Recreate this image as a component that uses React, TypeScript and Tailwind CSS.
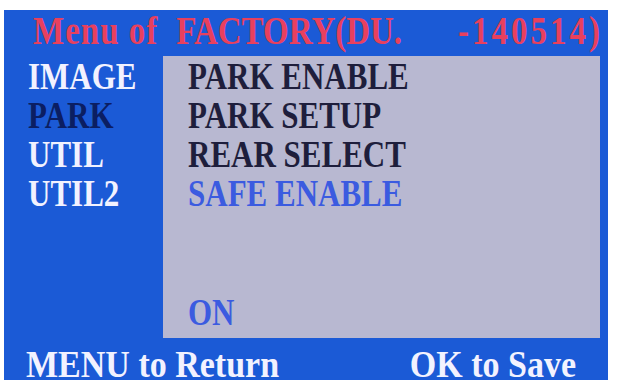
import React from "react";

const leftItems = [
  { label: "IMAGE", active: false },
  { label: "PARK", active: true },
  { label: "UTIL", active: false },
  { label: "UTIL2", active: false },
];

const rightItems = [
  { label: "PARK ENABLE", selected: false },
  { label: "PARK SETUP", selected: false },
  { label: "REAR SELECT", selected: false },
  { label: "SAFE ENABLE", selected: true },
];

const osdFont = { fontFamily: '"Liberation Serif", "Times New Roman", serif' };

const App: React.FC = () => {
  return (
    <div className="w-[617px] h-[385px] bg-white overflow-hidden" style={osdFont}>
      <div className="ml-[4px] mt-[10px] w-[604px] h-[370px] bg-[#1b5ad6] flex flex-col font-bold">
        {/* title */}
        <div className="h-[46px] flex items-center pl-[29px] pr-[5px] text-[#e8405e] text-[33px] leading-[46px]">
          <span className="inline-block scale-y-[1.2] -translate-y-[2px] tracking-[1px]">Menu of</span>
          <span className="inline-block scale-y-[1.2] -translate-y-[2px] ml-[18px]">FACTORY(DU.</span>
          <span className="inline-block scale-y-[1.2] -translate-y-[2px] ml-auto tracking-[3px]">-140514)</span>
        </div>

        {/* body */}
        <div className="flex h-[282px]">
          <div className="w-[159px] pl-[24px] pt-[1px] text-[31px] leading-[39px]">
            {leftItems.map((item) => (
              <div key={item.label} className="h-[39px]">
                <span
                  className={`inline-block scale-y-[1.22] ${
                    item.active ? "text-[#0b1e62]" : "text-[#f2f2ff]"
                  }`}
                >
                  {item.label}
                </span>
              </div>
            ))}
          </div>
          <div className="w-[437px] bg-[#b8b8d1] pl-[25px] pt-[1px] text-[31px] leading-[39px]">
            {rightItems.map((item) => (
              <div key={item.label} className="h-[39px]">
                <span
                  className={`inline-block scale-y-[1.22] ${
                    item.selected ? "text-[#3b5be0]" : "text-[#1e1e3c]"
                  }`}
                >
                  {item.label}
                </span>
              </div>
            ))}
            <div className="h-[39px] mt-[80px]">
              <span className="inline-block scale-y-[1.22] text-[#3b5be0]">ON</span>
            </div>
          </div>
        </div>

        {/* footer */}
        <div className="h-[42px] flex pl-[22px] pr-[32px] pt-[5px] text-[#f2f2ff] text-[34px] leading-[42px]">
          <span className="inline-block scale-y-[1.12]">MENU to Return</span>
          <span className="inline-block scale-y-[1.12] ml-auto">OK to Save</span>
        </div>
      </div>
    </div>
  );
};

export default App;
